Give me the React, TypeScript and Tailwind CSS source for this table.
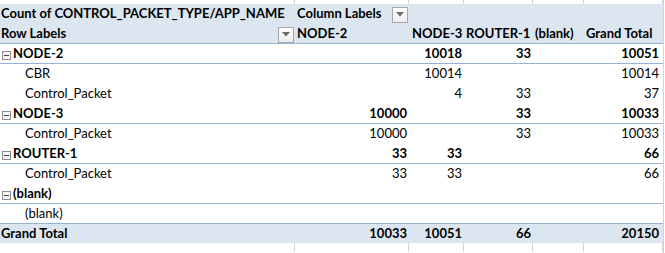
import React from 'react';

const cols = 'grid grid-cols-[295px_114px_55px_69px_51px_79px]';

type RowData = { label: string; group?: boolean; vals: string[] };

const rows: RowData[] = [
  { label: 'NODE-2', group: true, vals: ['', '10018', '33', '', '10051'] },
  { label: 'CBR', vals: ['', '10014', '', '', '10014'] },
  { label: 'Control_Packet', vals: ['', '4', '33', '', '37'] },
  { label: 'NODE-3', group: true, vals: ['10000', '', '33', '', '10033'] },
  { label: 'Control_Packet', vals: ['10000', '', '33', '', '10033'] },
  { label: 'ROUTER-1', group: true, vals: ['33', '33', '', '', '66'] },
  { label: 'Control_Packet', vals: ['33', '33', '', '', '66'] },
  { label: '(blank)', group: true, vals: ['', '', '', '', ''] },
  { label: '(blank)', vals: ['', '', '', '', ''] },
];

const DropButton = () => (
  <div className="w-[16px] h-[16px] border border-[#a6a6a6] bg-gradient-to-b from-white to-[#ececec] flex items-center justify-center">
    <svg width="8" height="5" viewBox="0 0 8 5">
      <path d="M0 0h8L4 4.5z" fill="#6b6b6b" />
    </svg>
  </div>
);

const Minus = () => (
  <div className="w-[9px] h-[9px] border border-[#8c8c8c] bg-[#f4f4f4] flex items-center justify-center mr-[2px]">
    <div className="w-[5px] h-[1px] bg-[#444]" />
  </div>
);

// gridline strip above / below the pivot
const GridStrip = ({ h }: { h: string }) => (
  <div className={`${cols} ${h}`}>
    {[0, 1, 2, 3, 4, 5].map((i) => (
      <div key={i} className="border-r border-[#d4d4d4]" />
    ))}
  </div>
);

export default function App() {
  return (
    <div
      className="w-[665px] h-[253px] bg-white overflow-hidden text-[13px] text-black flex"
      style={{ fontFamily: 'Lato, "Open Sans", sans-serif' }}
    >
      <div className="w-[663px] flex flex-col">
        <GridStrip h="h-[4px]" />

        {/* header */}
        <div className="bg-[#dce6f1] font-bold">
          <div className={`${cols} h-[20px]`}>
            <div className="pl-[1px] flex items-end pb-[2px] whitespace-nowrap">Count of CONTROL_PACKET_TYPE/APP_NAME</div>
            <div className="pl-[2px] flex items-center justify-between pr-[1px] whitespace-nowrap">
              <span className="self-end pb-[2px]">Column Labels</span>
              <DropButton />
            </div>
            <div />
            <div />
            <div />
            <div />
          </div>
          <div className={`${cols} h-[20px] border-b border-[#95b3d7]`}>
            <div className="pl-[1px] flex items-center justify-between pr-[1px]">
              <span className="self-end pb-[2px]">Row Labels</span>
              <DropButton />
            </div>
            <div className="pl-[2px] flex items-end pb-[2px]">NODE-2</div>
            <div className="pl-[3px] flex items-end pb-[2px]">NODE-3</div>
            <div className="pl-[2px] flex items-end pb-[2px] whitespace-nowrap">ROUTER-1</div>
            <div className="pl-[2px] flex items-end pb-[2px]">(blank)</div>
            <div className="pl-[2px] flex items-end pb-[2px] whitespace-nowrap">Grand Total</div>
          </div>
        </div>

        {/* body */}
        {rows.map((r, i) => (
          <div
            key={i}
            className={`${cols} h-[20px] ${r.group ? 'font-bold border-b border-[#95b3d7]' : ''}`}
          >
            <div className={`flex items-end pb-[2px] ${r.group ? 'pl-[2px]' : 'pl-[25px]'}`}>
              {r.group && <span className="self-center mt-[3px]"><Minus /></span>}
              {r.label}
            </div>
            {r.vals.map((v, j) => (
              <div key={j} className={`flex items-end justify-end pb-[2px] ${j === 4 ? 'pr-[4px]' : 'pr-[2px]'}`}>
                {v}
              </div>
            ))}
          </div>
        ))}

        {/* grand total */}
        <div className={`${cols} h-[20px] bg-[#dce6f1] font-bold border-t border-[#95b3d7] -mt-[1px]`}>
          <div className="pl-[1px] flex items-end pb-[2px]">Grand Total</div>
          {['10033', '10051', '66', '', '20150'].map((v, j) => (
            <div key={j} className={`flex items-end justify-end pb-[2px] ${j === 4 ? 'pr-[4px]' : 'pr-[2px]'}`}>
              {v}
            </div>
          ))}
        </div>

        <GridStrip h="h-[9px]" />
      </div>
      <div className="flex-1 border-l border-[#d4d4d4]" />
    </div>
  );
}
